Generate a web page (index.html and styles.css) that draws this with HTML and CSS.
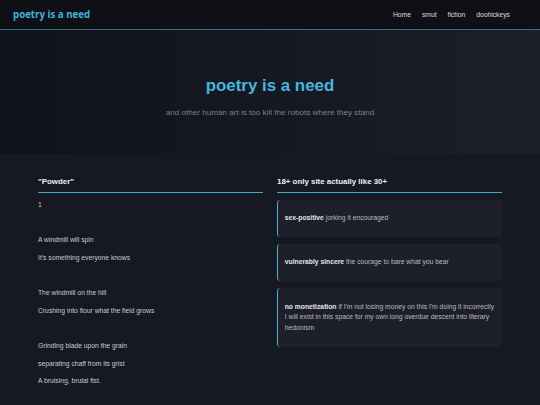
FILE: index.html
```html
<!DOCTYPE html>
<html lang="en">
<head>
<meta charset="utf-8">
<title>poetry is a need</title>
<link rel="stylesheet" href="styles.css">
</head>
<body>
<header class="site-header">
  <a class="logo" href="#">poetry is a need</a>
  <nav class="nav">
    <a href="#">Home</a>
    <a href="#">smut</a>
    <a href="#">fiction</a>
    <a href="#">doohickeys</a>
  </nav>
</header>
<section class="hero">
  <h1 class="hero-title">poetry is a need</h1>
  <p class="hero-sub">and other human art is too kill the robots where they stand</p>
</section>
<main class="main">
  <div class="columns">
    <article class="col">
      <h3 class="col-title">"Powder"</h3>
      <p class="line">1</p>
      <p class="line">&nbsp;</p>
      <p class="line">A windmill will spin</p>
      <p class="line">It's something everyone knows</p>
      <p class="line">&nbsp;</p>
      <p class="line">The windmill on the hill</p>
      <p class="line">Crushing into flour what the field grows</p>
      <p class="line">&nbsp;</p>
      <p class="line">Grinding blade upon the grain</p>
      <p class="line">separating chaff from its grist</p>
      <p class="line">A bruising, brutal fist.</p>
    </article>
    <aside class="col">
      <h3 class="col-title">18+ only site actually like 30+</h3>
      <div class="card"><p><strong>sex-positive</strong> jorking it encouraged</p></div>
      <div class="card"><p><strong>vulnerably sincere</strong> the courage to bare what you bear</p></div>
      <div class="card"><p><strong>no monetization</strong> if I'm not losing money on this I'm doing it incorrectly I will exist in this space for my own long overdue descent into literary hedonism</p></div>
    </aside>
  </div>
</main>
</body>
</html>
```

FILE: styles.css
```css
html, body {
  margin: 0;
  padding: 0;
}
body {
  background: #161921;
  font-family: "Liberation Sans", Arial, sans-serif;
  font-size: 6.75px;
  color: #c8c9cc;
}
a {
  text-decoration: none;
}
.site-header {
  display: flex;
  justify-content: space-between;
  align-items: center;
  height: 29px;
  padding: 0 30px 0 13px;
  background: #0e1016;
  border-bottom: 1.5px solid #3a6a7d;
}
.logo {
  font-family: "Open Sans", "DejaVu Sans", sans-serif;
  font-weight: 700;
  font-size: 9.7px;
  color: #3fb2da;
}
.nav {
  display: flex;
  gap: 11px;
}
.nav a {
  color: #dcdcdc;
  font-size: 6.75px;
}
.hero {
  padding: 46px 0 37px;
  text-align: center;
  background: linear-gradient(90deg, #10131a 0%, #161921 55%, #1d2029 100%);
}
.hero-title {
  margin: 0 0 12px;
  font-size: 16.9px;
  font-weight: 700;
  color: #45b6df;
}
.hero-sub {
  margin: 0;
  font-size: 8.1px;
  color: #7e8188;
}
.main {
  padding: 23px 0 20px;
}
.columns {
  width: 464px;
  margin: 0 auto;
  display: grid;
  grid-template-columns: 1fr 1fr;
  column-gap: 14px;
}
.col-title {
  margin: 0 0 6.5px;
  padding-bottom: 6px;
  font-size: 7.9px;
  font-weight: 700;
  color: #eeeff1;
  border-bottom: 1px solid #45a8c8;
}
.line {
  margin: 6.75px 0;
  line-height: 10.9px;
  color: #c9cacd;
}
.card {
  margin-bottom: 6.75px;
  padding: 0 6.75px;
  background: #1e2029;
  border-left: 1.7px solid #3eaed6;
  border-radius: 3.4px;
  overflow: hidden;
}
.card p {
  margin: 13.4px 0;
  line-height: 10.8px;
  color: #b9babe;
}
.card strong {
  color: #e4e5e7;
}
```
